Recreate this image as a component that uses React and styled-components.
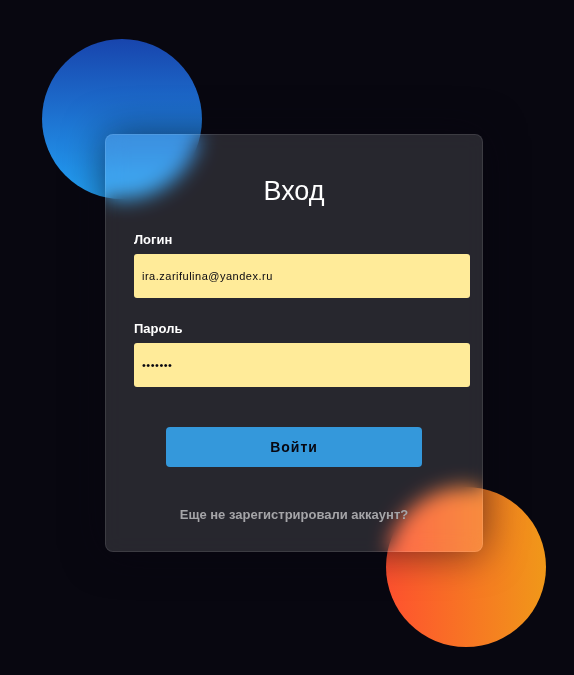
import React from 'react';
import styled, { createGlobalStyle } from 'styled-components';

const GlobalStyle = createGlobalStyle`
  *, *::before, *::after { box-sizing: border-box; }
  body {
    margin: 0;
    background: #080710;
    font-family: "Liberation Sans", Arial, sans-serif;
    color: #fff;
  }
`;

const Page = styled.main`
  min-height: 100vh;
  display: grid;
  place-items: center;
  padding: 10px 8px 0 22px;
`;

const Stage = styled.div`
  position: relative;
  width: 100%;
  max-width: 378px;
`;

const Orb = styled.div`
  position: absolute;
  width: 160px;
  height: 160px;
  border-radius: 50%;
`;

const BlueOrb = styled(Orb)`
  top: -95px;
  left: -63px;
  background: linear-gradient(#1845ad, #23a2f6);
`;

const OrangeOrb = styled(Orb)`
  right: -63px;
  bottom: -95px;
  background: linear-gradient(to right, #ff512f, #f09819);
`;

const Card = styled.form`
  position: relative;
  padding: 40px 12px 28px 28px;
  border: 1px solid rgba(255, 255, 255, 0.1);
  border-radius: 8px;
  background: rgba(255, 255, 255, 0.13);
  backdrop-filter: blur(10px);
  box-shadow: 0 0 40px rgba(8, 7, 16, 0.6);
`;

const Title = styled.h1`
  margin: 0 16px 25px 0;
  font-size: 27px;
  font-weight: 400;
  line-height: 32px;
  text-align: center;
`;

const Field = styled.div`
  display: flex;
  flex-direction: column;
  gap: 6px;
  margin-bottom: 23px;
`;

const Label = styled.label`
  font-size: 13px;
  font-weight: 700;
  line-height: 16px;
`;

const Input = styled.input`
  width: 100%;
  height: 44px;
  padding: 0 8px;
  border: 0;
  border-radius: 3px;
  background: #ffeb99;
  color: #080710;
  font-family: inherit;
  font-size: 11px;
  letter-spacing: 0.5px;
`;

const Submit = styled.button`
  display: block;
  width: calc(100% - 80px);
  height: 40px;
  margin: 40px 0 40px 32px;
  border: 0;
  border-radius: 4px;
  background: #3498db;
  color: #080710;
  font-family: inherit;
  font-size: 14px;
  font-weight: 700;
  letter-spacing: 1px;
  cursor: pointer;
`;

const RegisterLink = styled.a`
  display: block;
  margin-right: 16px;
  color: #a5a5a8;
  font-size: 13px;
  font-weight: 700;
  line-height: 16px;
  text-align: center;
  text-decoration: none;
`;

export default function App() {
  return (
    <>
      <GlobalStyle />
      <Page>
        <Stage>
          <BlueOrb />
          <OrangeOrb />
          <Card onSubmit={(event) => event.preventDefault()}>
            <Title>Вход</Title>
            <Field>
              <Label htmlFor="login">Логин</Label>
              <Input id="login" type="text" defaultValue="ira.zarifulina@yandex.ru" />
            </Field>
            <Field>
              <Label htmlFor="password">Пароль</Label>
              <Input id="password" type="password" defaultValue="1234567" />
            </Field>
            <Submit type="submit">Войти</Submit>
            <RegisterLink href="#register">Еще не зарегистрировали аккаунт?</RegisterLink>
          </Card>
        </Stage>
      </Page>
    </>
  );
}
